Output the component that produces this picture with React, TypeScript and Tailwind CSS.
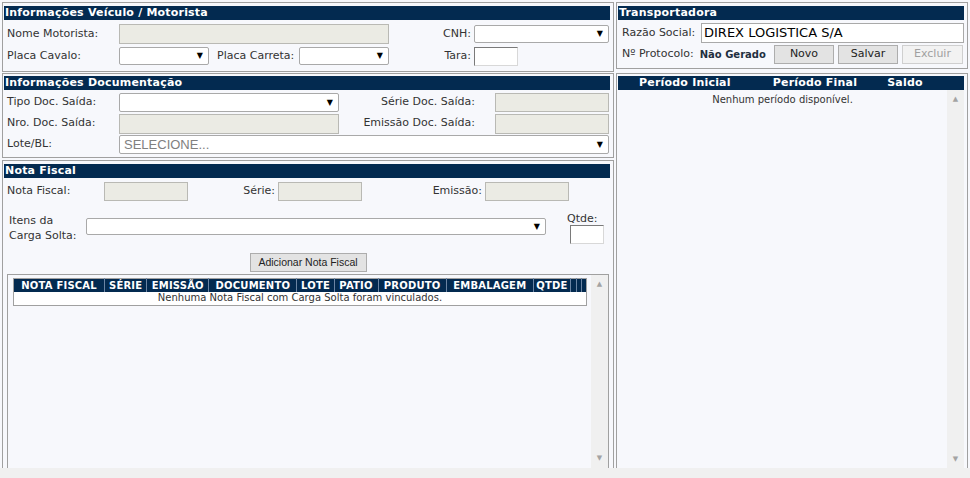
import React from 'react';

const Label: React.FC<{ className?: string; children: React.ReactNode }> = ({ children, className = '' }) => (
  <span className={`shrink-0 whitespace-nowrap text-[#333] ${className}`}>{children}</span>
);

const Disabled: React.FC<{ className?: string }> = ({ className = '' }) => (
  <div className={`shrink-0 border border-[#b9b9b4] bg-[#ebebe4] ${className}`} />
);

const Select: React.FC<{ className?: string; text?: string }> = ({ className = '', text }) => (
  <div className={`flex shrink-0 items-center justify-between rounded-[2px] border border-[#a9a9a9] bg-white pl-[4px] pr-[5px] ${className}`}>
    <span className="font-['Liberation_Sans',Arial,sans-serif] text-[13px] text-[#808080]">{text}</span>
    <span className="text-[8px] leading-none text-black">▼</span>
  </div>
);

const TextBox: React.FC<{ className?: string }> = ({ className = '' }) => (
  <div className={`shrink-0 border border-[#d8d8d8] border-t-[#7a7a7a] border-l-[#7a7a7a] bg-white ${className}`} />
);

const Title: React.FC<{ children: React.ReactNode; className?: string }> = ({ children, className = '' }) => (
  <div className={`ml-[1px] mr-[3px] h-[14px] bg-[#032a50] pl-[1px] text-[11px] font-bold leading-[14px] tracking-[0.2px] text-white ${className}`}>
    {children}
  </div>
);

const Btn: React.FC<{ children: React.ReactNode; disabled?: boolean; className?: string }> = ({ children, disabled, className = '' }) => (
  <div
    className={`flex h-[19px] shrink-0 items-center justify-center border text-[11px] ${
      disabled ? 'border-[#cfcfcf] bg-[#f2f2f2] text-[#a0a0a0]' : 'border-[#adadad] bg-[#e3e3e3] text-[#222]'
    } ${className}`}
  >
    {children}
  </div>
);

const ScrollBar: React.FC<{ className?: string }> = ({ className = '' }) => (
  <div className={`flex w-[17px] shrink-0 flex-col items-center justify-between bg-[#f0f0f0] py-[6px] ${className}`}>
    <span className="text-[7px] leading-none text-[#a3a3a3]">▲</span>
    <span className="text-[7px] leading-none text-[#a3a3a3]">▼</span>
  </div>
);

const cols = [
  { t: 'NOTA FISCAL', w: 91 },
  { t: 'SÉRIE', w: 42 },
  { t: 'EMISSÃO', w: 62 },
  { t: 'DOCUMENTO', w: 88 },
  { t: 'LOTE', w: 37 },
  { t: 'PATIO', w: 44 },
  { t: 'PRODUTO', w: 68 },
  { t: 'EMBALAGEM', w: 87 },
  { t: 'QTDE', w: 37 },
  { t: '', w: 6 },
  { t: '', w: 5 },
  { t: '', w: 5 },
];

const App: React.FC = () => {
  return (
    <div className="h-[478px] w-[970px] overflow-hidden bg-[#f7f8fc] font-['DejaVu_Sans',Verdana,sans-serif] text-[11px] text-[#333]">
      <div className="flex h-[468px] gap-[2px] overflow-hidden pl-[2px] pt-[2px]">
        {/* coluna esquerda */}
        <div className="flex w-[612px] shrink-0 flex-col">
          <div className="h-[70px] shrink-0 border border-[#a0a0a0] pt-[3px]">
            <Title>Informações Veículo / Motorista</Title>
            <div className="mt-[3px] flex h-[22px] items-center pl-[4px]">
              <Label className="w-[112px]">Nome Motorista:</Label>
              <Disabled className="h-[20px] w-[270px]" />
              <Label className="w-[85px] pr-[3px] text-right">CNH:</Label>
              <Select className="h-[18px] w-[135px]" />
            </div>
            <div className="flex h-[22px] items-center pl-[4px]">
              <Label className="w-[112px]">Placa Cavalo:</Label>
              <Select className="h-[18px] w-[90px]" />
              <Label className="ml-[8px] w-[82px]">Placa Carreta:</Label>
              <Select className="h-[18px] w-[90px]" />
              <Label className="w-[85px] pr-[3px] text-right">Tara:</Label>
              <TextBox className="h-[19px] w-[44px]" />
            </div>
          </div>

          <div className="mt-[1px] h-[85px] shrink-0 border border-[#a0a0a0] pt-[2px]">
            <Title>Informações Documentação</Title>
            <div className="mt-[2px] flex h-[21px] items-center pl-[4px]">
              <Label className="w-[112px]">Tipo Doc. Saída:</Label>
              <Select className="h-[19px] w-[220px]" />
              <Label className="w-[156px] pr-[20px] text-right">Série Doc. Saída:</Label>
              <Disabled className="h-[19px] w-[114px]" />
            </div>
            <div className="flex h-[21px] items-center pl-[4px]">
              <Label className="w-[112px]">Nro. Doc. Saída:</Label>
              <Disabled className="h-[20px] w-[220px]" />
              <Label className="w-[156px] pr-[20px] text-right">Emissão Doc. Saída:</Label>
              <Disabled className="h-[20px] w-[114px]" />
            </div>
            <div className="flex h-[21px] items-center pl-[4px]">
              <Label className="w-[112px]">Lote/BL:</Label>
              <Select className="h-[19px] w-[490px]" text="SELECIONE..." />
            </div>
          </div>

          <div className="mt-[2px] flex h-[310px] shrink-0 flex-col border border-[#a0a0a0] pt-[3px]">
            <Title>Nota Fiscal</Title>
            <div className="mt-[4px] flex h-[19px] items-center pl-[4px]">
              <Label className="w-[97px]">Nota Fiscal:</Label>
              <Disabled className="h-[19px] w-[84px]" />
              <Label className="w-[90px] pr-[3px] text-right">Série:</Label>
              <Disabled className="h-[19px] w-[84px]" />
              <Label className="w-[123px] pr-[3px] text-right">Emissão:</Label>
              <Disabled className="h-[19px] w-[84px]" />
            </div>
            <div className="mt-[11px] flex h-[34px] items-start pl-[6px]">
              <div className="mt-[1px] w-[77px] shrink-0 leading-[15px] text-[#333]">
                Itens da
                <br />
                Carga Solta:
              </div>
              <Select className="mt-[6px] h-[17px] w-[460px]" />
              <div className="ml-[24px] flex flex-col">
                <span className="-ml-[3px] leading-[13px]">Qtde:</span>
                <TextBox className="h-[19px] w-[34px]" />
              </div>
            </div>
            <div className="mt-[7px] flex justify-center">
              <div className="flex h-[19px] w-[117px] items-center justify-center border border-[#adadad] bg-[#e3e3e3] font-['Liberation_Sans',Arial,sans-serif] text-[10.5px] text-[#222]">
                Adicionar Nota Fiscal
              </div>
            </div>
            <div className="ml-[4px] mt-[2px] flex min-h-0 w-[602px] flex-1 border border-[#a0a0a0]">
              <div className="flex-1 pl-[5px] pt-[3px]">
                <table className="w-[574px] table-fixed border-collapse border border-[#a0a0a0]">
                  <colgroup>
                    {cols.map((c, i) => (
                      <col key={i} style={{ width: c.w }} />
                    ))}
                  </colgroup>
                  <thead>
                    <tr className="h-[13px] bg-[#032a50]">
                      {cols.map((c, i) => (
                        <th
                          key={i}
                          className="overflow-hidden whitespace-nowrap border-r border-[#6b84a3] p-0 text-center text-[10px] font-bold leading-[13px] tracking-[0.2px] text-white last:border-r-0"
                        >
                          {c.t}
                        </th>
                      ))}
                    </tr>
                  </thead>
                  <tbody>
                    <tr className="h-[13px] bg-white">
                      <td colSpan={12} className="p-0 text-center text-[10px] leading-[12px] text-[#333]">
                        Nenhuma Nota Fiscal com Carga Solta foram vinculados.
                      </td>
                    </tr>
                  </tbody>
                </table>
              </div>
              <ScrollBar />
            </div>
          </div>
        </div>

        {/* coluna direita */}
        <div className="flex w-[352px] shrink-0 flex-col">
          <div className="h-[67px] shrink-0 border border-[#a0a0a0] pt-[3px]">
            <Title>Transportadora</Title>
            <div className="mt-[2px] flex h-[21px] items-end pl-[5px]">
              <Label className="mb-[2px] w-[79px]">Razão Social:</Label>
              <div className="flex h-[20px] w-[263px] items-center border border-[#a9a9a9] bg-white pl-[2px] text-[13px] text-black">
                DIREX LOGISTICA S/A
              </div>
            </div>
            <div className="mt-[2px] flex h-[19px] items-center pl-[5px]">
              <Label>Nº Protocolo:</Label>
              <span className="ml-[6px] text-[10px] font-bold text-[#1f2f3f]">Não Gerado</span>
              <div className="ml-auto mr-[4px] flex gap-[4px]">
                <Btn className="w-[60px]">Novo</Btn>
                <Btn className="w-[60px]">Salvar</Btn>
                <Btn disabled className="w-[61px]">
                  Excluir
                </Btn>
              </div>
            </div>
          </div>

          <div className="mt-[4px] flex h-[397px] shrink-0 flex-col border border-[#a0a0a0] pt-[2px]">
            <div className="ml-[1px] mr-[3px] flex h-[14px] bg-[#032a50] text-[11px] font-bold leading-[14px] tracking-[0.2px] text-white">
              <span className="ml-[21px]">Período Inicial</span>
              <span className="ml-[42px]">Período Final</span>
              <span className="ml-[30px]">Saldo</span>
            </div>
            <div className="ml-[1px] mr-[3px] flex min-h-0 flex-1">
              <div className="flex-1 pt-[2px] text-center text-[10px] text-[#333]">Nenhum período disponível.</div>
              <ScrollBar />
            </div>
          </div>
        </div>
      </div>
      <div className="h-[10px] bg-[#f0f0f0]" />
    </div>
  );
};

export default App;
